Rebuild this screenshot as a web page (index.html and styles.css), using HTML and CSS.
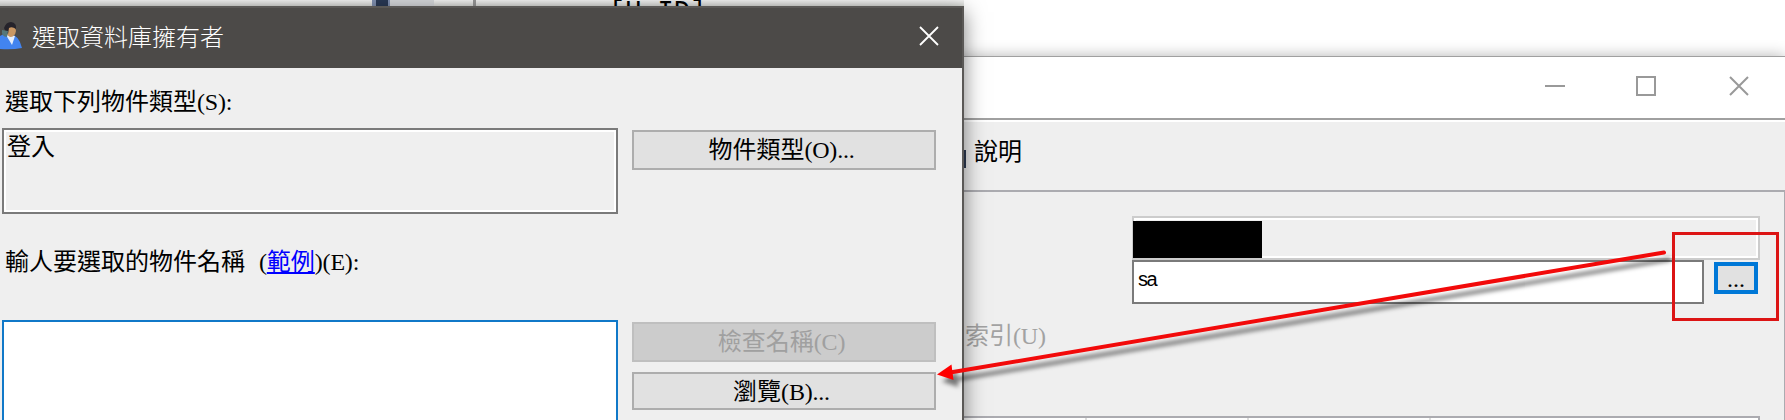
FILE: index.html
```html
<!DOCTYPE html>
<html lang="zh-Hant">
<head>
<meta charset="utf-8">
<title>選取資料庫擁有者</title>
<link rel="stylesheet" href="styles.css">
</head>
<body>
<main class="desktop">
  <div class="backdrop">
    <div class="strip strip-bar"></div>
    <div class="strip strip-tab"></div>
    <div class="strip strip-line"></div>
    <span class="backdrop-text">[U_ID]</span>
  </div>

  <section class="window owner-window">
    <header class="owner-title">
      <svg class="caption" viewBox="0 0 204 20" width="204" height="20">
        <path d="M0 10H20" /><rect x="92" y="1" width="18" height="18" /><path d="M185 1L203 19M203 1L185 19" />
      </svg>
    </header>
    <div class="toolbar"><i class="tool-edge"></i><span>說明</span></div>
    <div class="owner-body">
      <div class="fields">
        <div class="field-readonly"><div class="redacted"></div></div>
        <div class="field-row">
          <div class="field-owner">sa</div>
          <button class="browse">...</button>
        </div>
      </div>
      <div class="index-label">索引<span class="lat">(U)</span></div>
      <div class="grid"><i></i><i></i><i></i></div>
    </div>
  </section>

  <section class="window dialog">
    <header class="dialog-title">
      <svg class="user-icon" viewBox="0 0 22 28" width="22" height="28">
        <path class="coat" d="M0 14Q4 11 10 12Q19 13 22 26Q12 28 0 27Z" />
        <path class="shirt" d="M6 13L15 14L12 23Z" />
        <path class="face" d="M6 4Q16 3 16 9Q15 15 10 15Q6 13 5 8Z" />
        <path class="hair" d="M4 6Q6 0 11 0Q17 1 16 7Q12 4 9 6L8 12Q5 10 4 6Z" />
        <path class="headset" d="M2 8Q1 15 7 15L8 9Z" />
      </svg>
      <h1>選取資料庫擁有者</h1>
      <svg class="close" viewBox="0 0 20 20" width="20" height="20"><path d="M1 1L19 19M19 1L1 19" /></svg>
    </header>
    <div class="dialog-body">
      <div class="label label-types">選取下列物件類型<span class="lat">(S):</span></div>
      <div class="row row-types">
        <div class="types-box">登入</div>
        <button class="btn">物件類型<span class="lat">(O)...</span></button>
      </div>
      <div class="label label-names">輸人要選取的物件名稱<span class="lat open">(</span><a>範例</a><span class="lat">)(E):</span></div>
      <div class="row row-names">
        <div class="names-box"></div>
        <div class="btn-stack">
          <button class="btn disabled">檢查名稱<span class="lat">(C)</span></button>
          <button class="btn btn-browse">瀏覽<span class="lat">(B)...</span></button>
        </div>
      </div>
    </div>
  </section>

  <div class="marker-box"></div>
  <svg class="arrow" viewBox="0 0 1785 420" width="1785" height="420">
    <path class="shaft" d="M1664 252.500L950 372.500" /><path class="head" d="M937 374.500L951.500 364.500L953.500 380Z" />
  </svg>
</main>
</body>
</html>
```
FILE: styles.css
```css
* { box-sizing: border-box; }
body { margin: 0; background: #fff; }
.desktop {
  position: relative; width: 1785px; height: 420px; overflow: hidden;
  font: 24px/24px "Noto Sans CJK TC", sans-serif; color: #000;
}
.lat { font-family: "Liberation Serif", serif; font-size: 24px; letter-spacing: -0.2px; }
button { font: inherit; color: inherit; padding: 0; }

.backdrop { display: flex; width: 964px; height: 6px; background: linear-gradient(#f2f2f2, #d8dad6); }
.strip { flex: none; }
.strip-bar { margin-left: 372px; width: 18px; background: #293955; border: solid #8090b0; border-width: 0 2px 0 4px; }
.strip-tab { width: 44px; background: #d5d7da; }
.strip-line { margin-left: 39px; width: 3px; background: #969696; }
.backdrop-text { margin-left: 133px; font: 27px/24px "Liberation Mono", monospace; white-space: nowrap; }

.window { position: absolute; }
.owner-window { left: 900px; top: 56px; width: 885px; height: 364px; background: #efefef; border-top: 1px solid #a0a0a0; box-shadow: 0 0 14px rgba(0,0,0,.3); }
.owner-title { height: 61px; background: #fff; display: flex; justify-content: flex-end; padding: 19px 36px 0 0; }
.caption { fill: none; stroke: #999; stroke-width: 2; }
.toolbar { height: 74px; border-top: 2px solid #a0a0a0; border-bottom: 2px solid #ababb0; box-shadow: inset 0 2px #fff; display: flex; padding: 18px 0 0 64px; }
.tool-edge { width: 2px; height: 18px; margin: 12px 8px 0 0; background: #2e3b52; }
.owner-body { height: 228px; border-right: 1px solid #ababb0; }
.fields { padding: 24px 0 0 232px; }
.field-readonly { width: 628px; height: 44px; border: 2px solid #ccc; box-shadow: inset 0 0 0 2px #fff; }
.redacted { width: 129px; height: 37px; margin: 3px 0 0 -1px; background: #000; }
.field-row { display: flex; }
.field-owner { width: 572px; height: 44px; border: 2px solid #7a7a7a; background: #fff; padding: 5px 4px; font-family: "Liberation Sans", sans-serif; font-size: 20px; letter-spacing: -1.500px; }
.browse { width: 44px; height: 32px; margin: 2px 0 0 10px; border: 4px solid #0078d7; background: #e1e1e1; font-family: "Liberation Serif", serif; line-height: 26px; }
.index-label { margin: 18px 0 0 65px; height: 24px; color: #a2a2a2; }
.grid { display: flex; margin-top: 70px; width: 860px; height: 20px; border: 2px solid #ababb0; background: #fff; }
.grid i { width: 2px; background: #ddd; margin-left: 180px; }
.grid i:first-child { margin-left: 183px; }
.grid i:nth-child(2) { margin-left: 160px; }

.dialog { left: -20px; top: 6px; width: 984px; height: 440px; border: 2px solid #5a5856; background: #efefef; box-shadow: 0 6px 20px rgba(0,0,0,.5); }
.dialog-title { height: 60px; display: flex; background: #4c4a48; padding-left: 18px; color: #fff; }
.user-icon { margin: 14px 10px 0 0; }
.coat { fill: #4284f0; } .shirt { fill: #e5eefc; } .face { fill: #c99763; } .hair { fill: #25232b; } .headset { fill: #55777a; }
.dialog-title h1 { margin: 16px 0 0; font-size: 24px; line-height: 24px; font-weight: 300; }
.close { margin: 18px 23px 0 auto; fill: none; stroke: #fff; stroke-width: 1.8; }
.dialog-body { padding-left: 20px; }
.label { padding-left: 3px; white-space: nowrap; }
.label-types { padding-top: 20px; height: 60px; }
.row { display: flex; gap: 14px; }
.types-box { width: 616px; height: 86px; border: 2px solid #7a7a7a; box-shadow: inset 0 0 0 2px #fff; padding: 3px; }
.btn { display: block; width: 304px; height: 40px; border: 2px solid #adadad; background: #e1e1e1; line-height: 32px; padding: 0 5px 3px 0; }
.row-types .btn { margin-top: 2px; }
.label-names { height: 106px; padding-top: 34px; }
.open { margin-left: 14px; }
.label a { color: #00f; text-decoration: underline; text-underline-offset: 2px; text-decoration-thickness: 2px; }
.names-box { width: 616px; height: 120px; border: 2px solid #1078c8; background: #fff; }
.btn-stack { display: grid; gap: 10px; align-content: start; padding-top: 2px; }
.disabled { color: #a0a0a0; background: #ccc; border-color: #bfbfbf; }
.btn-browse { height: 38px; }

.marker-box { position: absolute; left: 1672px; top: 232px; width: 107px; height: 89px; border: 3px solid #dc1414; }
.arrow { position: absolute; left: 0; top: 0; filter: drop-shadow(5px 7px 2px rgba(0,0,0,.5)); }
.shaft { stroke: #f20a0a; stroke-width: 4; stroke-linecap: round; }
.head { fill: #f00; }
```
